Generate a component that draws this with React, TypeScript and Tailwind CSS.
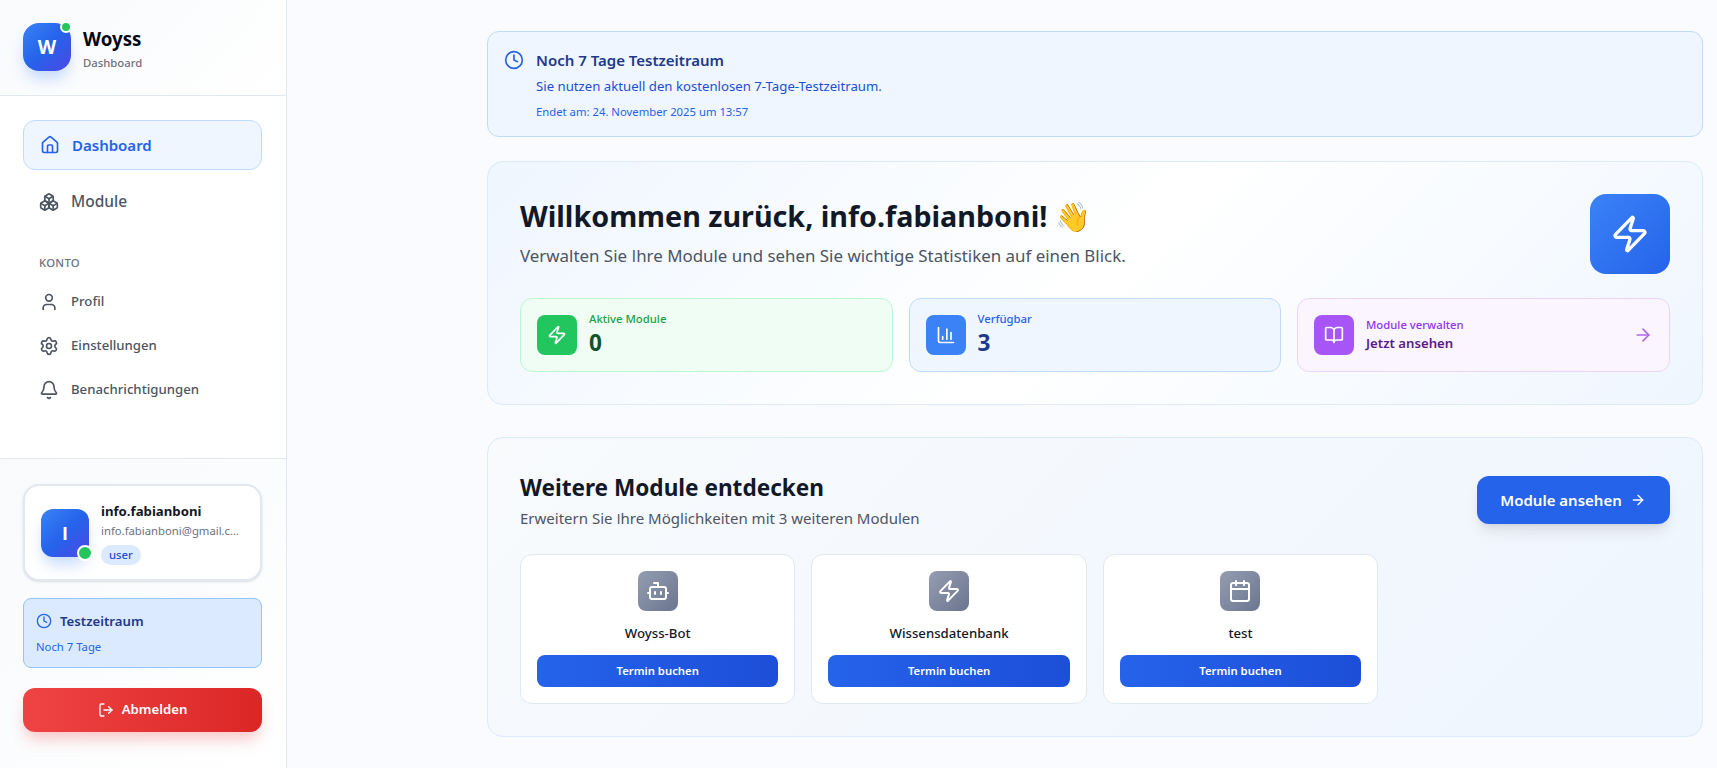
import { House, Boxes, User, Settings, Bell, Clock, LogOut, Zap, ChartColumn, BookOpen, ArrowRight, Bot, Calendar } from "lucide-react";
import type { ReactNode } from "react";

function ModuleCard({ name, icon }: { name: string; icon: ReactNode }) {
  return (
    <div className="flex flex-col items-center rounded-xl border border-[#e2e8f0] bg-white p-4">
      <div className="mb-3 flex h-10 w-10 items-center justify-center rounded-lg bg-[linear-gradient(135deg,#949db0,#6b7590)] text-white">{icon}</div>
      <div className="mb-3 text-[13.2px] font-medium leading-5 text-[#111827]">{name}</div>
      <button className="h-8 w-full rounded-lg bg-[linear-gradient(to_right,#2563eb,#1d4ed8)] text-[11.3px] font-semibold text-white">Termin buchen</button>
    </div>
  );
}

export default function App() {
  return (
    <div className="flex h-[768px] overflow-hidden bg-[#fafbfe] text-[#111827]" style={{ fontFamily: '"Noto Sans", sans-serif' }}>
      <aside className="flex h-full w-[287px] shrink-0 flex-col border-r border-[#e2e8f0] bg-white">
        <div className="flex h-[96px] items-start gap-3 border-b border-[#e2e8f0] bg-[linear-gradient(135deg,#f8fafc,#ffffff)] pl-[23px] pr-6 pt-[23px]">
          <div className="relative flex h-12 w-12 items-center justify-center rounded-2xl bg-[linear-gradient(135deg,#3b82f6,#2563eb_50%,#4f46e5)] text-[19px] font-bold text-white shadow-[0_10px_15px_-3px_rgba(59,130,246,0.3)]">
            W
            <span className="absolute -right-[1px] -top-[2px] h-3 w-3 rounded-full border-2 border-white bg-[#22c55e]" />
          </div>
          <div>
            <div className="text-[18.7px] font-bold leading-8 text-[#030712]">Woyss</div>
            <div className="text-[11.3px] font-medium leading-4 text-[#6b7280]">Dashboard</div>
          </div>
        </div>
        <nav className="flex-1 pl-[23px] pr-6 pt-6">
          <div className="flex h-[50px] items-center gap-3 rounded-xl border border-[#bfdbfe] bg-[#eff6ff] px-4 text-[15px] font-semibold text-[#2563eb]">
            <House size={20} />
            Dashboard
          </div>
          <div className="mt-[7px] flex h-[50px] items-center gap-3 px-4 text-[15.5px] font-medium text-[#4b5563]">
            <Boxes size={20} />
            Module
          </div>
          <div className="mt-[28px] px-4 text-[11.3px] font-medium uppercase leading-4 tracking-wide text-[#6b7280]">Konto</div>
          <div className="mt-[9px]">
            {[["Profil", User], ["Einstellungen", Settings], ["Benachrichtigungen", Bell]].map(([label, Icon]: any) => (
              <div key={label} className="flex h-11 items-center gap-3 px-4 text-[13.2px] font-medium text-[#4b5563]">
                <Icon size={20} />
                {label}
              </div>
            ))}
          </div>
        </nav>
        <div className="border-t border-[#e2e8f0] bg-[linear-gradient(135deg,#f8fafc,#ffffff)] pl-[23px] pr-6 pt-[25px]">
          <div className="flex h-[97px] items-center gap-3 rounded-2xl border-2 border-[#e2e8f0] bg-white px-4 shadow-sm">
            <div className="relative flex h-12 w-12 shrink-0 items-center justify-center rounded-xl bg-[linear-gradient(135deg,#3b82f6,#2563eb_50%,#4f46e5)] font-['Open_Sans'] text-lg font-bold text-white shadow-[0_10px_15px_-3px_rgba(59,130,246,0.3)]">
              I
              <span className="absolute -bottom-1 -right-1 h-4 w-4 rounded-full border-2 border-white bg-[#22c55e]" />
            </div>
            <div className="min-w-0 flex-1">
              <div className="text-[13.2px] font-bold leading-5 text-[#111827]">info.fabianboni</div>
              <div className="truncate text-[11.3px] leading-5 text-[#6b7280]">info.fabianboni@gmail.com</div>
              <span className="inline-block rounded-full bg-[#dbeafe] px-2 text-[11.3px] font-medium leading-5 text-[#1d4ed8]">user</span>
            </div>
          </div>
          <div className="mt-[17px] h-[70px] rounded-lg border border-[#93c5fd] bg-[#dbeafe] px-3 pt-3">
            <div className="flex items-center gap-2 text-[13.2px] font-semibold leading-5 text-[#1e3a8a]">
              <Clock size={16} className="text-[#2563eb]" />
              Testzeitraum
            </div>
            <div className="mt-2 text-[11.3px] leading-4 text-[#2563eb]">Noch 7 Tage</div>
          </div>
          <button className="mb-9 mt-5 flex h-11 w-full items-center justify-center gap-2 rounded-xl bg-[linear-gradient(to_right,#ef4444,#dc2626)] text-[13.2px] font-semibold text-white shadow-[0_10px_15px_-3px_rgba(239,68,68,0.3)]">
            <LogOut size={16} />
            Abmelden
          </button>
        </div>
      </aside>
      <main className="min-w-0 flex-1 pl-[200px] pr-[14.5px] pt-[31px]">
        <div className="mb-6 flex gap-3 rounded-xl border border-[#bfdbfe] bg-[#eff6ff] p-4">
          <Clock size={20} className="mt-0.5 text-[#2563eb]" />
          <div>
            <div className="text-[15px] font-semibold leading-6 text-[#1e3a8a]">Noch 7 Tage Testzeitraum</div>
            <div className="mt-1 text-[13.2px] leading-5 text-[#1d4ed8]">Sie nutzen aktuell den kostenlosen 7-Tage-Testzeitraum.</div>
            <div className="mt-2 text-[11.3px] leading-4 text-[#2563eb]">Endet am: 24. November 2025 um 13:57</div>
          </div>
        </div>
        <section className="mb-8 rounded-2xl border border-[#dbeafe] bg-[linear-gradient(135deg,#eff6ff,#ffffff_50%,#eff6ff)] p-8">
          <div className="mb-6 flex h-20 items-center justify-between">
            <div>
              <h1 className="mb-2 text-[28.7px] font-bold leading-9 text-[#111827]">Willkommen zurück, info.fabianboni! 👋</h1>
              <p className="text-[16.9px] leading-7 text-[#4b5563]">Verwalten Sie <span className="font-['Open_Sans']">I</span>hre Module und sehen Sie wichtige Statistiken auf einen Blick.</p>
            </div>
            <div className="flex h-20 w-20 items-center justify-center rounded-2xl bg-[linear-gradient(135deg,#3b82f6,#2563eb)] text-white">
              <Zap size={40} />
            </div>
          </div>
          <div className="grid grid-cols-3 gap-4">
            <div className="flex items-center gap-3 rounded-xl border border-[#bbf7d0] bg-[#f0fdf4] p-4">
              <div className="flex h-10 w-10 items-center justify-center rounded-lg bg-[#22c55e] text-white"><Zap size={20} /></div>
              <div className="flex h-10 flex-col justify-center">
                <div className="text-[11.3px] font-medium leading-4 text-[#16a34a]">Aktive Module</div>
                <div className="text-[22.6px] font-bold leading-8 text-[#14532d]">0</div>
              </div>
            </div>
            <div className="flex items-center gap-3 rounded-xl border border-[#bfdbfe] bg-[#eff6ff] p-4">
              <div className="flex h-10 w-10 items-center justify-center rounded-lg bg-[#3b82f6] text-white"><ChartColumn size={20} /></div>
              <div className="flex h-10 flex-col justify-center">
                <div className="text-[11.3px] font-medium leading-4 text-[#2563eb]">Verfügbar</div>
                <div className="text-[22.6px] font-bold leading-8 text-[#1e3a8a]">3</div>
              </div>
            </div>
            <div className="flex items-center gap-3 rounded-xl border border-[#e9d5ff] bg-[#faf5ff] p-4">
              <div className="flex h-10 w-10 items-center justify-center rounded-lg bg-[#a855f7] text-white"><BookOpen size={20} /></div>
              <div className="flex h-10 flex-1 flex-col justify-center">
                <div className="text-[11.3px] font-medium leading-4 text-[#9333ea]">Module verwalten</div>
                <div className="text-[13.2px] font-semibold leading-5 text-[#581c87]">Jetzt ansehen</div>
              </div>
              <ArrowRight size={20} className="text-[#b266ea]" />
            </div>
          </div>
        </section>
        <section className="rounded-2xl border border-[#dbeafe] bg-[linear-gradient(135deg,#f8fafc,#eff6ff)] p-8">
          <div className="mb-6 flex items-center justify-between">
            <div>
              <h2 className="text-[22.6px] font-bold leading-9 text-[#111827]">Weitere Module entdecken</h2>
              <p className="text-[15px] leading-6 text-[#4b5563]">Erweitern Sie <span className="font-['Open_Sans']">I</span>hre Möglichkeiten mit 3 weiteren Modulen</p>
            </div>
            <button className="flex h-12 w-[193px] items-center justify-center gap-2 rounded-xl bg-[#2563eb] text-[15px] font-semibold text-white shadow-lg">
              Module ansehen
              <ArrowRight size={16} />
            </button>
          </div>
          <div className="grid grid-cols-4 gap-4">
            <ModuleCard name="Woyss-Bot" icon={<Bot size={24} />} />
            <ModuleCard name="Wissensdatenbank" icon={<Zap size={24} />} />
            <ModuleCard name="test" icon={<Calendar size={24} />} />
          </div>
        </section>
      </main>
    </div>
  );
}
